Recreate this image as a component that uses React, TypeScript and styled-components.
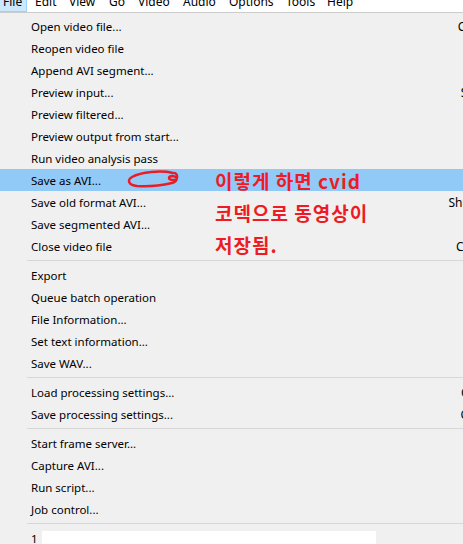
import React from "react";
import styled, { createGlobalStyle } from "styled-components";

const GlobalStyle = createGlobalStyle`
  html, body { margin: 0; padding: 0; background: #ffffff; overflow: hidden; }
  body { font-family: "Noto Sans", "Noto Sans CJK KR", sans-serif; }
`;

const Page = styled.div`
  position: relative;
  width: 463px;
  height: 544px;
  overflow: hidden;
  background: #ffffff;
`;

const MenuBar = styled.div`
  display: flex;
  height: 20px;
  margin-top: -8px;
  background: #ffffff;
  font-size: 12px;
  color: #000;
`;

const BarItem = styled.div<{ $w: number; $active?: boolean }>`
  box-sizing: border-box;
  width: ${(p) => p.$w}px;
  margin-right: ${(p) => (p.$active ? 5 : 0)}px;
  padding-left: 3px;
  line-height: 20px;
  white-space: nowrap;
  background: ${(p) => (p.$active ? "#cce8ff" : "transparent")};
  border-right: 1px solid ${(p) => (p.$active ? "#99d1ff" : "transparent")};
  border-bottom: 1px solid ${(p) => (p.$active ? "#99d1ff" : "transparent")};
`;

const Dropdown = styled.div`
  box-sizing: border-box;
  width: 522px;
  margin-left: -1px;
  border: 1px solid #cccccc;
  background: #f0f0f0;
  padding: 2px 0 3px;
  font-size: 11.5px;
  color: #000;
`;

const Row = styled.div<{ $hl?: boolean }>`
  display: grid;
  grid-template-columns: 31px 1fr auto;
  align-items: center;
  height: 22px;
  padding-right: 26px;
  background: ${(p) => (p.$hl ? "#91c9f7" : "transparent")};
  white-space: nowrap;
`;

const Label = styled.span`
  grid-column: 2;
`;

const Shortcut = styled.span`
  grid-column: 3;
  font-size: 12px;
  text-align: right;
`;

const Separator = styled.div`
  height: 1px;
  margin: 3px 0 3px 27px;
  background: #d7d7d7;
`;

const RecentRow = styled.div`
  display: flex;
  align-items: center;
  height: 22px;
  padding-left: 31px;
`;

const Redaction = styled.span`
  display: block;
  width: 334px;
  height: 18px;
  margin: 4px 0 0 4px;
  align-self: flex-start;
  background: #ffffff;
`;

const Annotation = styled.div`
  position: absolute;
  left: 215px;
  top: 165px;
  font-family: "Noto Sans CJK KR", "Noto Sans", sans-serif;
  font-weight: 700;
  font-size: 19px;
  letter-spacing: 1px;
  line-height: 32px;
  color: #ed1c24;
  white-space: nowrap;
`;

const Scribble = styled.svg`
  position: absolute;
  left: 125px;
  top: 168px;
`;

type Item = { label: string; key?: string; hl?: boolean } | "sep";

const items: Item[] = [
  { label: "Open video file...", key: "Ctrl+O" },
  { label: "Reopen video file", key: "F2" },
  { label: "Append AVI segment..." },
  { label: "Preview input...", key: "Space" },
  { label: "Preview filtered..." },
  { label: "Preview output from start...", key: "F5" },
  { label: "Run video analysis pass" },
  { label: "Save as AVI...", key: "F7", hl: true },
  { label: "Save old format AVI...", key: "Shift+F7" },
  { label: "Save segmented AVI..." },
  { label: "Close video file", key: "Ctrl+W" },
  "sep",
  { label: "Export" },
  { label: "Queue batch operation" },
  { label: "File Information..." },
  { label: "Set text information..." },
  { label: "Save WAV..." },
  "sep",
  { label: "Load processing settings...", key: "Ctrl+L" },
  { label: "Save processing settings...", key: "Ctrl+S" },
  "sep",
  { label: "Start frame server..." },
  { label: "Capture AVI..." },
  { label: "Run script..." },
  { label: "Job control...", key: "F4" },
  "sep",
];

const bar: { label: string; w: number; active?: boolean }[] = [
  { label: "File", w: 27, active: true },
  { label: "Edit", w: 34 },
  { label: "View", w: 40 },
  { label: "Go", w: 29 },
  { label: "Video", w: 45 },
  { label: "Audio", w: 46 },
  { label: "Options", w: 57 },
  { label: "Tools", w: 41 },
  { label: "Help", w: 40 },
];

export default function App() {
  return (
    <>
      <GlobalStyle />
      <Page>
        <MenuBar>
          {bar.map((b) => (
            <BarItem key={b.label} $w={b.w} $active={b.active}>
              {b.label}
            </BarItem>
          ))}
        </MenuBar>
        <Dropdown>
          {items.map((it, i) =>
            it === "sep" ? (
              <Separator key={i} />
            ) : (
              <Row key={i} $hl={it.hl}>
                <Label>{it.label}</Label>
                {it.key && <Shortcut>{it.key}</Shortcut>}
              </Row>
            )
          )}
          <RecentRow>
            <span>1</span>
            <Redaction />
          </RecentRow>
        </Dropdown>
        <Scribble width="56" height="22" viewBox="0 0 56 22">
          <path
            d="M48 5 C 36 2, 16 4, 7 9 C 2 12, 3 17, 12 18 C 24 19, 38 17, 47 15 C 52 14, 54 9, 48 8 C 43 8, 42 12, 49 12 C 53 12, 53 7, 50 5"
            fill="none"
            stroke="#ed1c24"
            strokeWidth="2.4"
            strokeLinecap="round"
            strokeLinejoin="round"
          />
        </Scribble>
        <Annotation>
          이렇게 하면 cvid
          <br />
          코덱으로 동영상이
          <br />
          저장됨.
        </Annotation>
      </Page>
    </>
  );
}
